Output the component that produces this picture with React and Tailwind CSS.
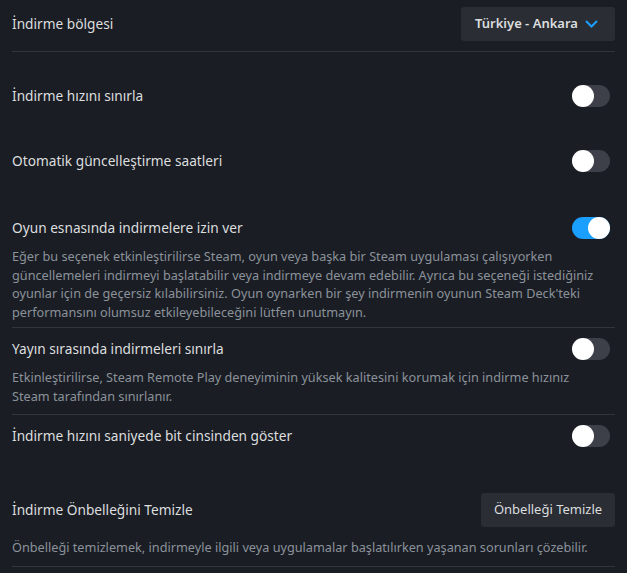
const Toggle = ({ on = false }) => (
  <div
    className={`relative mr-[5px] h-[22px] w-[38px] shrink-0 rounded-full ${
      on ? "bg-[#1a9fff]" : "bg-[#3d4048]"
    }`}
  >
    <div
      className={`absolute top-0 h-[22px] w-[22px] rounded-full bg-white ${
        on ? "right-0" : "left-0"
      }`}
    />
  </div>
);

const Desc = ({ children }) => (
  <p className="mt-[7px] pr-[14px] text-[12.7px] leading-[18.5px] text-[#8b929a]">{children}</p>
);

const Title = ({ children }) => (
  <span className="text-[13.7px] text-[#dcdedf]">{children}</span>
);

const ToggleRow = ({ label, on }) => (
  <div className="flex h-6 items-center justify-between">
    <Title>{label}</Title>
    <Toggle on={on} />
  </div>
);

const App = () => {
  return (
    <div
      className="h-[573px] w-full overflow-hidden bg-[#1a1d24] px-3"
      style={{ fontFamily: '"Noto Sans", "Open Sans", sans-serif' }}
    >
      {/* indirme bölgesi */}
      <div className="border-b border-[#32353c] pt-[7px] pb-[10px]">
        <div className="flex h-[34px] items-center justify-between">
          <Title>İndirme bölgesi</Title>
          <button className="flex h-[34px] w-[154px] items-center justify-between rounded-[3px] bg-[#2a2d34] pl-[14px] pr-[17px] text-[13px] font-semibold text-[#dcdedf]">
            <span>Türkiye - Ankara</span>
            <svg width="13" height="8" viewBox="0 0 13 8" fill="none">
              <path d="M1 1l5.5 5.5L12 1" stroke="#1a9fff" strokeWidth="2" />
            </svg>
          </button>
        </div>
      </div>

      <div className="pt-8">
        <ToggleRow label="İndirme hızını sınırla" />
      </div>

      <div className="pt-[41px]">
        <ToggleRow label="Otomatik güncelleştirme saatleri" />
      </div>

      <div className="border-b border-[#32353c] pt-[43px] pb-[6px]">
        <ToggleRow label="Oyun esnasında indirmelere izin ver" on />
        <Desc>
          Eğer bu seçenek etkinleştirilirse Steam, oyun veya başka bir Steam uygulaması çalışıyorken
          güncellemeleri indirmeyi başlatabilir veya indirmeye devam edebilir. Ayrıca bu seçeneği
          istediğiniz oyunlar için de geçersiz kılabilirsiniz. Oyun oynarken bir şey indirmenin
          oyunun Steam Deck'teki performansını olumsuz etkileyebileceğini lütfen unutmayın.
        </Desc>
      </div>

      <div className="border-b border-[#32353c] pt-[9px] pb-[9px]">
        <ToggleRow label="Yayın sırasında indirmeleri sınırla" />
        <Desc>
          Etkinleştirilirse, Steam Remote Play deneyiminin yüksek kalitesini korumak için indirme
          hızınız Steam tarafından sınırlanır.
        </Desc>
      </div>

      <div className="pt-[9px]">
        <ToggleRow label="İndirme hızını saniyede bit cinsinden göster" />
      </div>

      <div className="border-b border-[#32353c] pt-[45px] pb-[9px]">
        <div className="flex h-[34px] items-center justify-between">
          <Title>İndirme Önbelleğini Temizle</Title>
          <button className="h-[34px] w-[134px] rounded-[3px] bg-[#2a2d34] text-[13px] text-[#dcdedf]">
            Önbelleği Temizle
          </button>
        </div>
        <p className="mt-[11px] text-[12.7px] leading-[18.5px] text-[#8b929a]">
          Önbelleği temizlemek, indirmeyle ilgili veya uygulamalar başlatılırken yaşanan sorunları
          çözebilir.
        </p>
      </div>
    </div>
  );
};

export default App;
